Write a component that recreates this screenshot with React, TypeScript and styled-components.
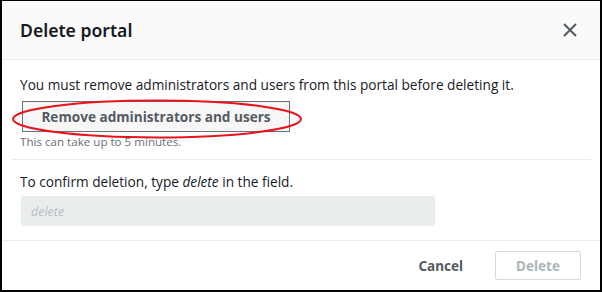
import React from "react";
import styled, { createGlobalStyle } from "styled-components";

const Global = createGlobalStyle`
  html, body { margin: 0; padding: 0; background: #fff; }
  * { box-sizing: border-box; }
`;

const Frame = styled.div`
  width: 602px;
  height: 292px;
  border: 2px solid #000;
  border-top-width: 1px;
  background: #fff;
  display: flex;
  flex-direction: column;
  font-family: "Open Sans", "Liberation Sans", sans-serif;
  color: #16191f;
`;

const Header = styled.div`
  height: 59px;
  flex: none;
  background: #fafafa;
  border-bottom: 1px solid #eaeded;
  display: flex;
  align-items: center;
  justify-content: space-between;
  padding: 0 20px 0 18px;
`;

const Title = styled.h2`
  margin: 0;
  font-family: "Noto Sans", "Open Sans", sans-serif;
  font-weight: 600;
  font-size: 17.6px;
  color: #16191f;
`;

const CloseButton = styled.button`
  border: none;
  background: none;
  padding: 0;
  width: 20px;
  height: 20px;
  display: flex;
  align-items: center;
  justify-content: center;
  color: #545b64;
`;

const Section = styled.div<{ $pt: number; $h: number }>`
  padding: ${(p) => p.$pt}px 18px 0 18px;
  height: ${(p) => p.$h}px;
  flex: none;
  display: flex;
  flex-direction: column;
`;

const Para = styled.p`
  margin: 0;
  font-size: 13.65px;
  line-height: 18px;
  color: #16191f;
`;

const ButtonWrap = styled.div`
  position: relative;
  margin: 7px 0 0 2px;
  width: 268px;
`;

const OutlineButton = styled.button`
  width: 268px;
  height: 31px;
  border: 1px solid #6b7079;
  background: #f7f7f7;
  font-family: "Open Sans", "Liberation Sans", sans-serif;
  font-weight: 700;
  font-size: 13.6px;
  color: #545b64;
  padding: 0;
`;

const Ellipse = styled.svg`
  position: absolute;
  left: -12px;
  top: -3px;
  pointer-events: none;
`;

const Hint = styled.div`
  margin-top: 3px;
  font-size: 11.6px;
  line-height: 14px;
  color: #687078;
`;

const Divider = styled.div<{ $inset: number }>`
  height: 1px;
  background: #eaeded;
  margin: 0 ${(p) => p.$inset}px;
  flex: none;
`;

const Input = styled.input`
  margin-top: 5px;
  margin-left: 1px;
  width: 414px;
  height: 30px;
  border: none;
  border-radius: 2px;
  background: #eaeded;
  padding: 0 10px;
  font-family: "Open Sans", "Liberation Sans", sans-serif;
  font-size: 12.5px;
  font-style: italic;
  &::placeholder { color: #b6bec0; }
`;

const Footer = styled.div`
  flex: 1;
  display: flex;
  align-items: center;
  justify-content: flex-end;
  gap: 32px;
  padding: 0 19px 0 0;
`;

const TextButton = styled.button<{ $disabled?: boolean }>`
  font-family: "Noto Sans", "Open Sans", sans-serif;
  font-weight: 700;
  font-size: 13.5px;
  background: #fff;
  padding: 0;
  height: 29px;
  color: ${(p) => (p.$disabled ? "#aab7b8" : "#545b64")};
  border: ${(p) => (p.$disabled ? "1px solid #d5dbdb" : "none")};
  width: ${(p) => (p.$disabled ? "86px" : "auto")};
  border-radius: 2px;
`;

export default function App() {
  return (
    <>
      <Global />
      <Frame>
        <Header>
          <Title>Delete portal</Title>
          <CloseButton aria-label="Close">
            <svg width="16" height="16" viewBox="0 0 16 16">
              <path d="M2 2 L14 14 M14 2 L2 14" stroke="#545b64" strokeWidth="2" fill="none" />
            </svg>
          </CloseButton>
        </Header>
        <Section $pt={16} $h={99}>
          <Para>You must remove administrators and users from this portal before deleting it.</Para>
          <ButtonWrap>
            <OutlineButton>Remove administrators and users</OutlineButton>
            <Ellipse width="296" height="44" viewBox="0 0 296 44">
              <ellipse cx="147" cy="21" rx="144" ry="18.5" fill="none" stroke="#e8131b" strokeWidth="2" />
            </Ellipse>
          </ButtonWrap>
          <Hint>This can take up to 5 minutes.</Hint>
        </Section>
        <Divider $inset={9} />
        <Section $pt={13} $h={80}>
          <Para>
            To confirm deletion, type <i>delete</i> in the field.
          </Para>
          <Input placeholder="delete" />
        </Section>
        <Divider $inset={0} />
        <Footer>
          <TextButton>Cancel</TextButton>
          <TextButton $disabled>Delete</TextButton>
        </Footer>
      </Frame>
    </>
  );
}
